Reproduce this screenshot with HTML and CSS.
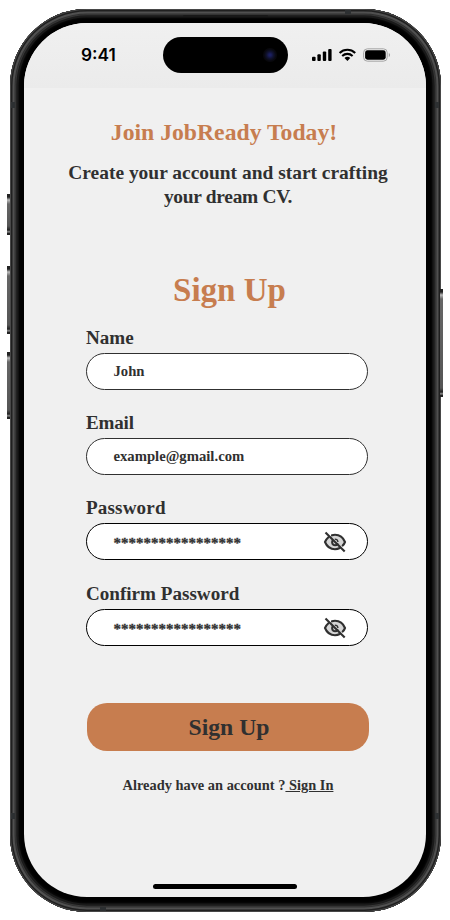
FILE: index.html
```html
<!DOCTYPE html>
<html lang="en">
<head>
<meta charset="utf-8">
<title>JobReady – Sign Up</title>
<link rel="stylesheet" href="styles.css">
</head>
<body>
<svg class="defs" width="0" height="0" aria-hidden="true">
  <symbol id="eye-off" viewBox="0 0 24 24">
    <path d="M2 12C4 7.700 7.600 5.300 12 5.300s8 2.300 10 6.700c-2 4.400-5.600 7-10 7S4 16.400 2 12Z" fill="#d6d6d6"/>
    <path d="M9 5.300c1-.4 2-.5 3-.5 4.600 0 8.200 2.700 10 7.200-.6 1.500-1.300 2.600-2.300 3.600M5.400 7.200C4 8.400 2.800 10 2 12c1.800 4.400 5.500 7.200 10 7.200 1.900 0 3.300-.4 4.800-1.200M9.600 10.600c-1.300 2.300.1 4.700 2.400 4.700 1 0 1.900-.4 2.500-1.200" fill="none" stroke="#303030" stroke-width="2.100" stroke-linecap="round"/>
    <path d="M11.800 9.200c2 0 3 1 3.200 2.800" fill="none" stroke="#303030" stroke-width="1.300"/>
    <path d="M2.500 2.500l19.200 19" stroke="#303030" stroke-width="2.100"/>
  </symbol>
</svg>
<div class="phone">
  <i class="key key-action"></i><i class="key key-up"></i><i class="key key-down"></i><i class="key key-power"></i>
  <i class="speaker"></i>
  <i class="band band-tl"></i><i class="band band-tr"></i><i class="band band-bl"></i><i class="band band-br"></i>
  <i class="band band-top"></i><i class="band band-bottom"></i>
  <div class="screen">
    <header class="status">
      <span class="time">9:41</span>
      <span class="island"><i class="lens"></i></span>
      <svg class="indicators" width="80" height="14" viewBox="0 0 80 14">
        <rect x="0" y="8.700" width="3.600" height="4.300" rx="1"/>
        <rect x="5.400" y="6.200" width="3.400" height="6.800" rx="1"/>
        <rect x="10.800" y="3.600" width="3.400" height="9.400" rx="1"/>
        <rect x="16.200" y="1" width="3.400" height="12" rx="1"/>
        <g fill="none" stroke="#000" stroke-width="2.100">
          <path d="M27.600 4.900c4.400-4.200 11.200-4.200 15.600 0"/>
          <path d="M30.200 8c3-2.800 7.400-2.800 10.400 0"/>
        </g>
        <path d="M32.500 9.900c1.700-1.400 4.100-1.400 5.800 0L35.400 13Z"/>
        <rect x="51.600" y=".8" width="23.600" height="12.400" rx="3.800" fill="none" stroke="#a5a5a5"/>
        <rect x="53.100" y="2.300" width="20.600" height="9.400" rx="2.400"/>
        <path d="M76.800 5c1.700.6 1.700 3.400 0 4Z" fill="#a0a0a0"/>
      </svg>
    </header>
    <main class="content">
      <h1 class="title">Join JobReady Today!</h1>
      <p class="subtitle">Create your account and start crafting<br><span class="tight">your dream CV.</span></p>
      <h2 class="heading">Sign Up</h2>
      <form class="form">
        <div class="field">
          <span class="label">Name</span>
          <div class="input"><span>John</span></div>
        </div>
        <div class="field">
          <span class="label email-label">Email</span>
          <div class="input"><span>example@gmail.com</span></div>
        </div>
        <div class="field">
          <span class="label password-label">Password</span>
          <div class="input secret"><span class="stars">*****************</span><svg class="eye"><use href="#eye-off"/></svg></div>
        </div>
        <div class="field confirm">
          <span class="label">Confirm Password</span>
          <div class="input secret"><span class="stars">*****************</span><svg class="eye"><use href="#eye-off"/></svg></div>
        </div>
        <button class="submit" type="button">Sign Up</button>
      </form>
      <p class="signin">Already have an account ?<a class="link"> Sign In</a></p>
    </main>
    <i class="home"></i>
  </div>
</div>
</body>
</html>
```
FILE: styles.css
```css
* { box-sizing: border-box; }
body {
  margin: 0;
  height: 920px;
  overflow: hidden;
  background: #fff;
  color: #303030;
  font-family: "Liberation Serif", serif;
  font-weight: 700;
}
h1, h2, p { margin: 0; font-weight: 700; }
.defs { position: absolute; }

.phone {
  position: relative;
  width: 431px;
  height: 903px;
  margin: 8.500px 0 0 9.500px;
  padding: 14.500px;
  border-radius: 77px;
  background: #000;
  box-shadow:
    inset 0 0 0 1px #484848,
    inset 0 0 0 2.500px #202020,
    inset 0 0 0 4.500px #505050,
    inset 0 0 0 5.500px #303030,
    inset 0 0 0 6.300px #383838,
    inset 0 0 0 8.500px #1a1a1a,
    inset 0 0 2px 9.500px #0a0a0a;
}
.screen {
  display: flex;
  flex-direction: column;
  width: 402px;
  height: 874px;
  border-radius: 63px;
  overflow: hidden;
  background: #f0f0f0;
}

.key {
  position: absolute;
  width: 3px;
  left: -2.500px;
  background: linear-gradient(#222 0 3px, #bbb 6px, #666 10px, #555 calc(100% - 9px), #222 calc(100% - 5px), #999 calc(100% - 3px), #222 calc(100% - 2px));
}
.key-action { top: 185px; height: 41px; }
.key-up { top: 257px; height: 68px; }
.key-down { top: 343px; height: 67px; }
.key-power { left: auto; right: -2.500px; top: 280px; height: 108px; }
.speaker {
  position: absolute;
  left: 173px;
  top: 6px;
  width: 85px;
  height: 2px;
  border-radius: 2px;
  background: #181818;
}
.band { position: absolute; width: 4px; height: 6px; background: #2d3032; }
.band-tl { left: 1.500px; top: 93px; }
.band-tr { right: 1.500px; top: 93px; }
.band-bl { left: 1.500px; bottom: 93px; }
.band-br { right: 1.500px; bottom: 93px; }
.band-top { right: 90px; top: 1px; width: 6px; height: 4px; }
.band-bottom { left: 90px; bottom: 1px; width: 6px; height: 4px; }

.status {
  display: flex;
  flex: none;
  align-items: flex-start;
  height: 65px;
  padding-top: 14px;
  background: linear-gradient(#f0f0f0, #ebebeb);
}
.time {
  width: 82px;
  margin-left: 57px;
  font: 600 17.300px/36px Inter, sans-serif;
  color: #000;
}
.island {
  display: flex;
  align-items: center;
  justify-content: flex-end;
  width: 125px;
  height: 36px;
  padding-right: 11px;
  border-radius: 18px;
  background: #000;
}
.lens {
  width: 14px;
  height: 14px;
  border-radius: 50%;
  background: radial-gradient(circle, #1b1f60 0 1px, #10122f 3.500px, #08080d 6px);
}
.indicators { margin: 11px 0 0 24px; }

.content {
  display: flex;
  flex-direction: column;
  flex: 1;
  padding: 30px 0 0;
}
.title {
  margin-right: 2px;
  font-size: 23.700px;
  line-height: 28px;
  text-align: center;
  color: #c77d4f;
}
.subtitle {
  margin: 15px 0 0 6px;
  font-size: 19.450px;
  line-height: 24px;
  text-align: center;
}
.tight { letter-spacing: -.3px; }
.heading {
  margin: 61px 0 0 9px;
  font-size: 33px;
  line-height: 40px;
  text-align: center;
  color: #c77d4f;
}
.form {
  display: flex;
  flex-direction: column;
  gap: 20px;
  width: 283px;
  margin: 15px 0 0 62px;
}
.field { display: flex; flex-direction: column; gap: 3px; }
.confirm { margin-top: 1px; }
.label { padding-top: 1px; font-size: 19.100px; line-height: 24px; }
.email-label { letter-spacing: -.2px; }
.password-label { letter-spacing: .15px; }
.input {
  display: flex;
  align-items: center;
  justify-content: space-between;
  width: 282px;
  height: 37px;
  padding: 0 20px 0 26.500px;
  border: 1px solid #303030;
  border-radius: 19px;
  background: #fff;
  font-size: 14.700px;
}
.secret { border-color: #000; }
.stars { font-size: 15px; line-height: 20px; padding-top: 2px; -webkit-text-stroke: .3px #303030; }
.eye { width: 24px; height: 24px; }
.submit {
  width: 282px;
  height: 48px;
  margin: 37px 0 0 1px;
  padding: 0 0 0 2px;
  border: 0;
  border-radius: 20px;
  background: #c77d4f;
  color: #303030;
  font: 700 23.700px/48px "Liberation Serif", serif;
}
.signin {
  margin: 24px 0 0 6px;
  font-size: 14.400px;
  line-height: 20px;
  text-align: center;
}
.link { text-decoration: underline; white-space: pre; }
.home {
  align-self: center;
  width: 144px;
  height: 5px;
  margin-bottom: 8px;
  border-radius: 3px;
  background: #000;
}
```
